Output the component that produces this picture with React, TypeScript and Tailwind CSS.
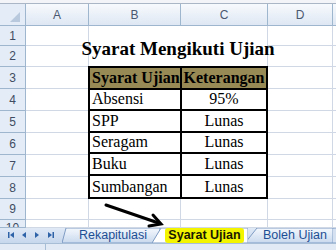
const serif = "font-['Liberation_Serif','Times_New_Roman',serif]";
const sans = "font-['Liberation_Sans',Arial,sans-serif]";

const rows = ["1", "2", "3", "4", "5", "6", "7", "8", "9", "10"];

const items = [
  { name: "Absensi", ket: "95%" },
  { name: "SPP", ket: "Lunas" },
  { name: "Seragam", ket: "Lunas" },
  { name: "Buku", ket: "Lunas" },
  { name: "Sumbangan", ket: "Lunas" },
];

const cell = "border-r border-b border-[#d0d7e5] bg-white";
const colHead =
  "flex items-center justify-center border-r border-b border-[#9eb6ce] bg-gradient-to-b from-[#f7fafd] to-[#dee7f3] text-[12px] text-[#4a5870]";
const rowHead =
  "flex items-center justify-center border-r border-b border-[#9eb6ce] bg-[#e4ecf7] text-[12px] text-[#3f4c62]";

function NavIcons() {
  return (
    <svg width="60" height="15" viewBox="0 0 60 15" className="shrink-0">
      <g fill="#2e63a8">
        <rect x="8" y="4" width="1.5" height="6" />
        <path d="M14 4 L10 7 L14 10 Z" />
        <path d="M26 4 L22 7 L26 10 Z" />
        <path d="M35 4 L39 7 L35 10 Z" />
        <path d="M48 4 L52 7 L48 10 Z" />
        <rect x="52.5" y="4" width="1.5" height="6" />
      </g>
    </svg>
  );
}

function Tab({
  width,
  slant,
  label,
  active,
  className,
}: {
  width: number;
  slant: number;
  label: string;
  active?: boolean;
  className?: string;
}) {
  return (
    <div className={`relative h-[15px] shrink-0 ${className ?? ""}`} style={{ width }}>
      <svg width={width} height="15" className="absolute inset-0">
        <defs>
          <linearGradient id="tabg" x1="0" y1="0" x2="0" y2="1">
            <stop offset="0" stopColor="#f4f8fd" />
            <stop offset="1" stopColor="#c9d9ee" />
          </linearGradient>
        </defs>
        <polygon
          points={`${slant},0 ${width},0 ${width},15 0,15`}
          fill={active ? "#ffffff" : "url(#tabg)"}
          stroke="#7f9cc4"
          strokeWidth="1"
        />
      </svg>
      <div
        className={`relative flex h-full items-center justify-center ${sans} ${
          active ? "font-bold text-[12.5px] text-[#1a1a00]" : "text-[12.5px] text-[#1d4f94]"
        }`}
        style={{ paddingLeft: slant }}
      >
        {active ? (
          <span className="rounded-[3px] bg-[#f3f500] px-[3px] leading-[15px]">{label}</span>
        ) : (
          <span className="leading-[15px]">{label}</span>
        )}
      </div>
    </div>
  );
}

export default function App() {
  return (
    <div className="relative h-[250px] w-[336px] overflow-hidden bg-white">
      <div className="h-[4px] border-b border-[#aab6c6] bg-[#f2f4f7]" />
      <div
        className={`grid grid-cols-[26px_63px_92px_87px_65px_1fr] grid-rows-[22px_20px_21px_22px_22px_22px_22px_22px_22px_21px_8px] ${sans}`}
      >
        {/* merged title B1:C2 */}
        <div className="relative z-10 col-start-3 col-span-2 row-start-2 row-span-2 flex items-center justify-center border-r border-[#d0d7e5] bg-white pt-[5px]">
          <span className={`${serif} whitespace-nowrap text-[19px] font-bold text-black`}>
            Syarat Mengikuti Ujian
          </span>
        </div>

        {/* table B3:C8 */}
        <div className="relative z-10 col-start-3 col-span-2 row-start-4 row-span-6 -ml-px -mt-px grid grid-cols-[92px_1fr] grid-rows-6 border-2 border-black bg-white">
          <div className={`${serif} flex items-end pb-[1px] leading-[18px] border-r-2 border-b-2 border-black bg-[#978a55] pl-[2px] text-[16px] font-bold whitespace-nowrap`}>
            Syarat Ujian
          </div>
          <div className={`${serif} flex items-end pb-[1px] leading-[18px] justify-center border-b-2 border-black bg-[#978a55] text-[16px] font-bold`}>
            Keterangan
          </div>
          {items.map((it, i) => (
            <div key={it.name} className="contents">
              <div
                className={`${serif} flex items-end pb-[1px] leading-[18px] border-r-2 border-black pl-[2px] text-[16px] ${
                  i < items.length - 1 ? "border-b-2" : ""
                }`}
              >
                {it.name}
              </div>
              <div
                className={`${serif} flex items-end pb-[1px] leading-[18px] justify-center border-black text-[16px] ${
                  i < items.length - 1 ? "border-b-2" : ""
                }`}
              >
                {it.ket}
              </div>
            </div>
          ))}
        </div>

        {/* header row */}
        <div className="relative border-r border-b border-[#9eb6ce] bg-[#e4ecf7]">
          <svg width="25" height="21" className="absolute inset-0">
            <polygon points="20,8 20,18 10,18" fill="#b9c9dd" />
          </svg>
        </div>
        {["A", "B", "C", "D"].map((c) => (
          <div key={c} className={colHead}>
            {c}
          </div>
        ))}
        <div className="border-b border-[#9eb6ce] bg-gradient-to-b from-[#f7fafd] to-[#dee7f3]" />

        {rows.map((n, i) => {
          const idx = i + 1;
          const inTitle = idx <= 2;
          const inTable = idx >= 3 && idx <= 8;
          return (
            <div key={n} className="contents">
              <div className={`${rowHead} ${idx === 10 ? "items-start overflow-hidden" : ""}`}>
                <span className={idx === 10 ? "mt-[1px] leading-[14px]" : ""}>{n}</span>
              </div>
              <div className={cell} />
              {!inTitle && !inTable && (
                <>
                  <div className={cell} />
                  <div className={cell} />
                </>
              )}
              <div className={cell} />
              <div className="border-b border-[#d0d7e5] bg-white" />
            </div>
          );
        })}
      </div>

      {/* sheet tabs */}
      <div className="flex h-[15px] bg-gradient-to-b from-[#dfe9f6] to-[#c7d7ec]">
        <NavIcons />
        <div className="flex">
          <Tab width={98} slant={4} label="Rekapitulasi" className="ml-[2px] z-0" />
          <Tab width={96} slant={9} label="Syarat Ujian" active className="-ml-[8px] z-20" />
          <Tab width={88} slant={12} label="Boleh Ujian" className="-ml-[3px] z-10" />
          <div className="-ml-[8px] z-0">
            <svg width="12" height="15">
              <polygon points="8,0 12,0 12,15 0,15" fill="#d5e1f1" stroke="#7f9cc4" />
            </svg>
          </div>
        </div>
      </div>
      <div className="flex h-[7px] border-t border-[#a8bdd6] bg-[#e2eaf5]">
        <div className="w-[46px] border-r border-[#a8bdd6]" />
      </div>

      {/* arrow drawing */}
      <svg width="336" height="250" className="pointer-events-none absolute inset-0 z-30">
        <g stroke="#000" strokeWidth="3" fill="none" strokeLinecap="round">
          <line x1="106" y1="205" x2="160" y2="223.5" />
          <polyline points="153,215 161,224 149,226" strokeLinejoin="miter" />
        </g>
      </svg>
    </div>
  );
}
